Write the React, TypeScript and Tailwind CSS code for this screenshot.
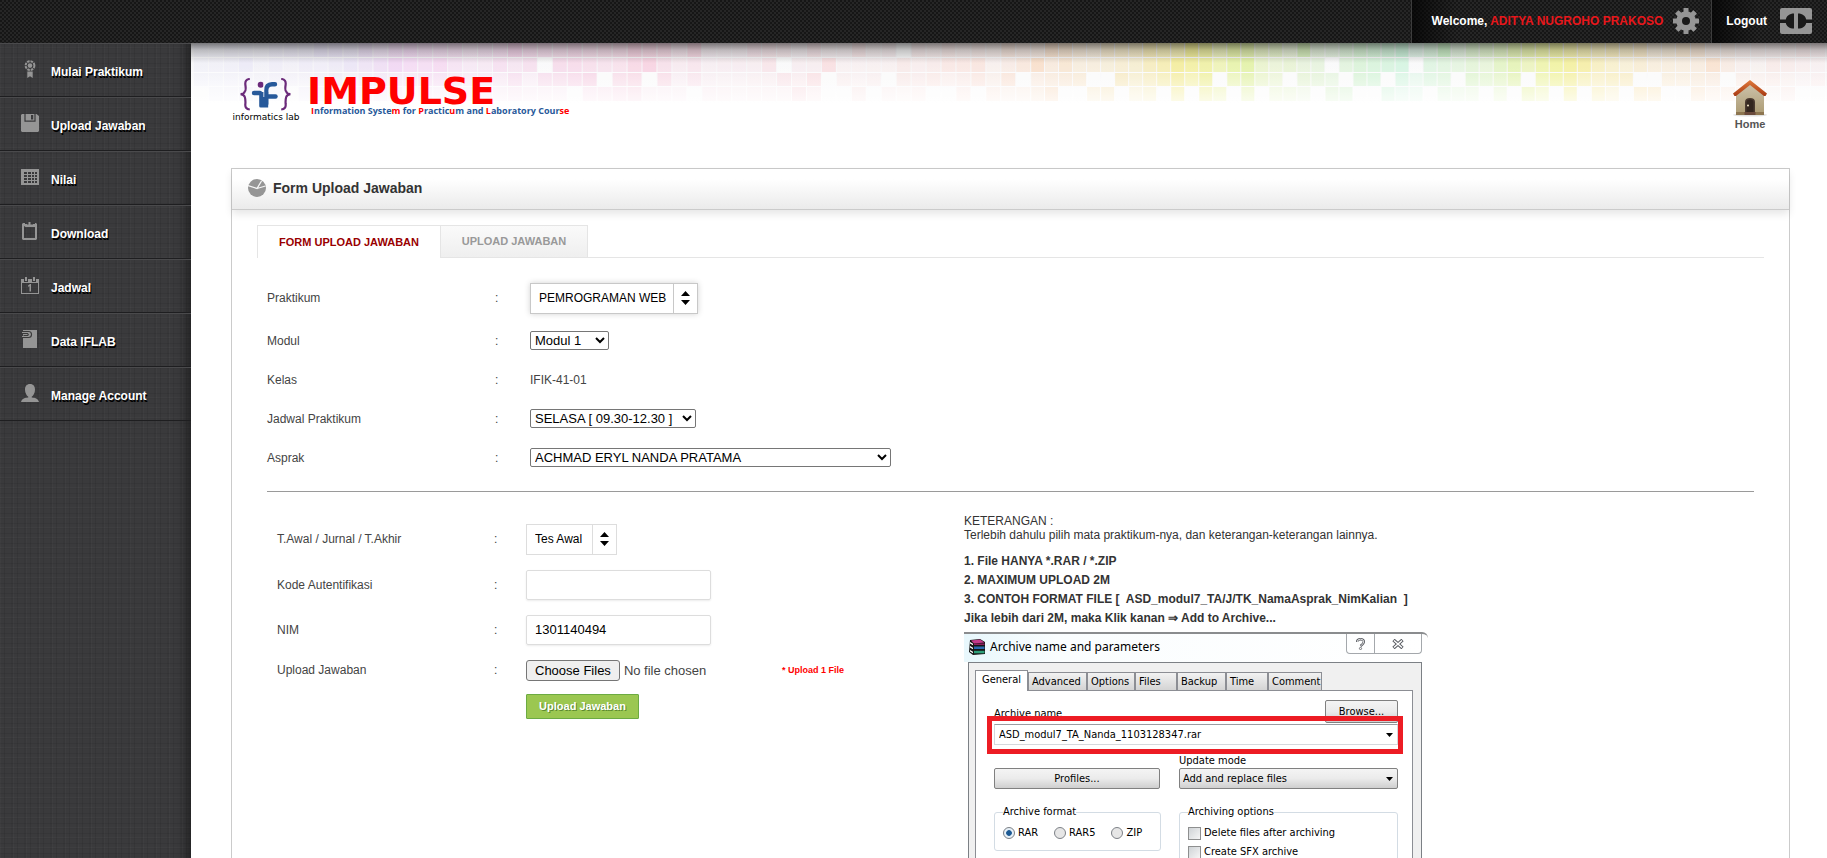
import type { ReactNode } from "react";

/* ---------- Mosaic backdrop ---------- */

// One entry per column, one digit per row: 0 is empty, 9 is the strongest tint.
const mosaicColumns =
  "1210 1211 2211 2513 1111 3321 3110 3312 6222 5331 4511 6532 4743 6932 6730 5652 5751 5432 3221 4222 5521 8352 6511 5051 5651 6660 5573 " +
  "5403 5454 8765 7901 7561 3211 8440 1112 1212 1211 5222 5622 4062 1237 5283 1900 1120 5114 1120 2102 0441 3232 2340 4520 2533 3650 2123 5362 3502 3934 7447 6640 4340 3304 5305 5460 5443 7654 6760 6987 9860 8887 5605 " +
  "8860 8986 5440 5333 3403 9342 3340 3035 5405 7660 7660 7605 8653 3022 5440 9443 3302 5452 5340 6653 8870 8607 8875 8980 7987 6850 5545 6453 5350 6406 3306 4330 6330 6446 3943 3403 2232 2122 2431 3424 5310 3230 2110 2210";

const tintStops: [number, number, number, number][] = [
  [0, 226, 226, 246],
  [150, 222, 210, 242],
  [210, 242, 200, 240],
  [430, 247, 194, 216],
  [560, 248, 214, 222],
  [760, 250, 214, 206],
  [850, 248, 214, 184],
  [940, 244, 224, 150],
  [990, 242, 234, 118],
  [1040, 222, 240, 132],
  [1110, 204, 236, 170],
  [1210, 184, 242, 208],
  [1290, 204, 240, 160],
  [1350, 236, 242, 132],
  [1390, 246, 232, 124],
  [1450, 249, 222, 166],
  [1510, 249, 218, 190],
  [1570, 248, 218, 210],
  [1640, 248, 224, 226],
];

function tintAt(x: number) {
  for (let i = 1; i < tintStops.length; i++) {
    const a = tintStops[i - 1];
    const b = tintStops[i];
    if (x <= b[0]) {
      const t = Math.max(0, (x - a[0]) / (b[0] - a[0]));
      const mix = [1, 2, 3].map((c) => Math.round(a[c] + (b[c] - a[c]) * t));
      return `rgb(${mix.join(",")})`;
    }
  }
  return "rgb(248,224,226)";
}

function columnEdge(k: number) {
  if (k <= 56) return 3 + k * 14.95;
  if (k <= 102) return 840 + (k - 56) * 14.02;
  return 1485 + (k - 102) * 15;
}

const mosaicRows = [0, 15, 30, 44];

function Mosaic() {
  return (
    <svg className="absolute left-0 top-0 h-[60px] w-[1660px]" viewBox="0 0 1660 60" aria-hidden="true">
      <defs>
        <linearGradient id="fade" x1="0" y1="0" x2="0" y2="1">
          <stop offset="0" stopColor="#fff" stopOpacity="0" />
          <stop offset="0.5" stopColor="#fff" stopOpacity="0.15" />
          <stop offset="1" stopColor="#fff" stopOpacity="0.75" />
        </linearGradient>
        <linearGradient id="haze" x1="0" y1="0" x2="0" y2="1">
          <stop offset="0" stopColor="#f0f0f3" />
          <stop offset="1" stopColor="#fff" />
        </linearGradient>
        <linearGradient id="drop" x1="0" y1="0" x2="0" y2="1">
          <stop offset="0" stopColor="#000" stopOpacity="0.5" />
          <stop offset="0.35" stopColor="#000" stopOpacity="0.22" />
          <stop offset="1" stopColor="#000" stopOpacity="0" />
        </linearGradient>
      </defs>
      <rect width="1660" height="60" fill="url(#haze)" />
      {mosaicColumns.split(" ").map((col, k) => {
        const x = columnEdge(k);
        const w = columnEdge(k + 1) - x - 1;
        return col.split("").map((d, r) => (
          <rect
            key={`${k}-${r}`}
            x={x}
            y={mosaicRows[r]}
            width={w}
            height={14}
            fill={d === "0" ? "#fafafa" : tintAt(x)}
            opacity={d === "0" ? 0.8 : 0.16 + Number(d) * 0.066}
          />
        ));
      })}
      {mosaicRows.slice(1).map((y) => (
        <rect key={y} y={y - 1} width="1660" height="1" fill="#fbfbfd" />
      ))}
      <rect width="1660" height="60" fill="url(#fade)" />
      <rect width="1660" height="20" fill="url(#drop)" />
    </svg>
  );
}

/* ---------- Icons ---------- */

const AwardIcon = () => (
  <svg viewBox="0 0 18 18" className="h-[18px] w-[18px]" fill="#959595" aria-hidden="true">
    <circle cx="9" cy="5.6" r="4.4" fill="none" stroke="#959595" strokeWidth="2" strokeDasharray="2.6 .85" />
    <circle cx="9" cy="5.6" r="2.3" />
    <path d="M6.3 11.5h5.4V18L9 16.2 6.3 18z" />
  </svg>
);
const DiskIcon = () => (
  <svg viewBox="0 0 18 18" className="h-[18px] w-[18px]" fill="#959595" aria-hidden="true">
    <path fillRule="evenodd" d="M0 1 1 0h2.400v7.800h11.200V0h.9L18 2v15l-1 1H1l-1-1zM4.600 0h8.800v6.600H4.600zM10 1v4.500h2.200V1z" />
  </svg>
);
const TableIcon = () => (
  <svg viewBox="0 0 18 16" className="h-4 w-[18px]" aria-hidden="true">
    <path
      fill="#959595"
      fillRule="evenodd"
      d="M0 0h18v16H0zM3 3v2h3V3zm4 0v2h3V3zm4 0v2h2V3zm3 0v2h2V3zM3 6v2h3V6zm4 0v2h3V6zm4 0v2h2V6zm3 0v2h2V6zM3 9v2h3V9zm4 0v2h3V9zm4 0v2h2V9zm3 0v2h2V9zM3 12v2h3v-2zm4 0v2h3v-2zm4 0v2h2v-2zm3 0v2h2v-2z"
    />
  </svg>
);
const ClipboardIcon = () => (
  <svg viewBox="0 0 16 18" className="ml-px h-[18px] w-4" fill="#959595" aria-hidden="true">
    <path fillRule="evenodd" d="M1 1h2v1h2v2h6V2h2V1h1l1 1v15l-1 1H1l-1-1V2zm1 3v12h11V5h-1.500H3.500z" />
    <path d="M4 2.500h2.500V0h2v2.500H11V5H4z" />
  </svg>
);
const CalendarIcon = () => (
  <svg viewBox="0 0 18 17" className="h-[17px] w-[18px]" fill="#959595" aria-hidden="true">
    <path fillRule="evenodd" d="M0 2h3v3h4V2h4v3h4V2h3v15H0zm1 4v10h16V6z" />
    <path d="M4 0h2v4H4zM12 0h2v4h-2zM7 8.500 9 7h1v7.500H8.500V9.200L7 9.700z" />
  </svg>
);
const DocClipIcon = () => (
  <svg viewBox="0 0 16 18" className="ml-px h-[18px] w-4" aria-hidden="true">
    <path fill="#959595" d="M1 0h14v18H1z" />
    <path fill="none" stroke="#3a3a3a" strokeWidth="1.200" d="M0 1.500h6.500a3 3 0 0 1 0 6H0M0 3.500h5.500a1.200 1.200 0 0 1 0 2.200H1.500" />
    <path fill="none" stroke="#959595" strokeWidth="1" d="M0 2.500h6a2 2 0 0 1 0 4H0" />
  </svg>
);
const PersonIcon = () => (
  <svg viewBox="0 0 18 18" className="h-[18px] w-[18px]" fill="#959595" aria-hidden="true">
    <path d="M9 0c3.400 0 5 2.400 5 5.600 0 3.300-1.600 6.500-3.500 7.400l.5.600c2.600.400 6 .600 7 4.400H0c1-3.800 4.400-4 7-4.400l.5-.600C5.600 12.100 4 8.900 4 5.600 4 2.400 5.600 0 9 0z" />
  </svg>
);
const PieIcon = () => (
  <svg viewBox="0 0 18 18" className="h-[18px] w-[18px]" aria-hidden="true">
    <circle cx="9" cy="9" r="9" fill="#959595" />
    <path d="M0 6.500 9 9.500 13.500 2M9 9.500 17.500 7" fill="none" stroke="#f6f6f6" strokeWidth="1.300" />
  </svg>
);
const GearIcon = () => (
  <svg viewBox="0 0 26 26" className="h-[26px] w-[26px] shrink-0" fill="#959595" aria-hidden="true">
    {[0, 45, 90, 135].map((a) => (
      <rect key={a} x="10.500" y="0" width="5" height="26" rx=".5" transform={`rotate(${a} 13 13)`} />
    ))}
    <circle cx="13" cy="13" r="9.800" />
    <circle cx="13" cy="13" r="4" fill="#191919" />
  </svg>
);
const ExitIcon = () => (
  <svg viewBox="0 0 32 26" className="h-[26px] w-8 shrink-0" aria-hidden="true">
    <rect width="32" height="26" rx="2" fill="#959595" />
    <path d="M14 5.500v15c-4.500 0-7.500-2-8.200-5.500H0v-3.500h5.800C6.500 8 9.500 5.500 14 5.500zM18 5.500c4.500 0 7.500 2.500 8.200 6H32V15h-5.800c-.7 3.500-3.700 5.500-8.200 5.500z" fill="#191919" />
  </svg>
);
const HouseIcon = () => (
  <svg viewBox="0 0 36 38" className="h-[38px] w-9" aria-hidden="true">
    <defs>
      <linearGradient id="wall" x1="0" y1="0" x2="0" y2="1">
        <stop offset="0" stopColor="#cfc5ae" />
        <stop offset="1" stopColor="#ab9a72" />
      </linearGradient>
      <linearGradient id="roof" x1="0" y1="0" x2="0" y2="1">
        <stop offset="0" stopColor="#e07a3c" />
        <stop offset="1" stopColor="#a83a12" />
      </linearGradient>
    </defs>
    <ellipse cx="18" cy="36" rx="17" ry="1.600" fill="#000" opacity=".12" />
    <path d="M4 14 18 3l14 11v22H4z" fill="url(#wall)" />
    <path d="M4 33h28v3H4z" fill="#8d7650" />
    <path d="M13 35V23q0-4 5-4t5 4v12z" fill="#4a3a30" />
    <path d="M14.500 34V23.500q0-3 3.500-3t3.500 3V34z" fill="#33261f" />
    <circle cx="16" cy="26.500" r="1" fill="#f4e6c8" />
    <path d="M12.500 33h11v3h-11z" fill="#6a4a3c" />
    <path d="M18 1 35 14.500l-1.500 2.500H32L18 6 4 17H2.500L1 14.500z" fill="url(#roof)" />
  </svg>
);

function BraceLogo() {
  return (
    <svg viewBox="0 0 52 33" className="h-[33px] w-[52px]" aria-hidden="true">
      <g fill="none" stroke="#6b2a7a" strokeWidth="2.200">
        <path d="M9.800 1Q4.600 1.200 5.400 7T4.800 13.500Q4 16 .6 16.200 4 16.600 4.800 19T5.400 25.500Q4.600 31 9.800 31.500" />
        <path d="M41.200 1Q46.400 1.200 45.600 7T46.200 13.500Q47 16 50.400 16.200 47 16.600 46.200 19T45.600 25.500Q46.400 31 41.200 31.500" />
      </g>
      <circle cx="20.700" cy="6.700" r="3" fill="#6b2a7a" />
      <path d="M19.200 14h9v15.500h-7.500q-1.500 0-1.500-1.500z" fill="#27599a" />
      <g fill="none" stroke="#27599a" strokeWidth="4.400" strokeLinecap="round" strokeLinejoin="round">
        <path d="M14 15h6" />
        <path d="M26.200 26V12.500Q26.200 6.500 32 6.300h3" />
        <path d="M26 18.500h9.500" />
      </g>
      <path d="M23.800 5v14" stroke="#fff" strokeWidth=".8" />
    </svg>
  );
}

function UpDown() {
  return (
    <svg viewBox="0 0 9 14" className="h-[14px] w-[9px]" aria-hidden="true">
      <path d="M4.500 0 9 5H0zM4.500 14 9 9H0z" />
    </svg>
  );
}

/* ---------- Page pieces ---------- */

const menu: { label: string; icon: ReactNode }[] = [
  { label: "Mulai Praktikum", icon: <AwardIcon /> },
  { label: "Upload Jawaban", icon: <DiskIcon /> },
  { label: "Nilai", icon: <TableIcon /> },
  { label: "Download", icon: <ClipboardIcon /> },
  { label: "Jadwal", icon: <CalendarIcon /> },
  { label: "Data IFLAB", icon: <DocClipIcon /> },
  { label: "Manage Account", icon: <PersonIcon /> },
];

function TopBar() {
  return (
    <header className="relative z-10 flex h-[43px] shrink-0 justify-end bg-[conic-gradient(#262626_25%,#161616_0_50%,#262626_0_75%,#161616_0)] bg-[length:4px_4px] text-xs font-bold text-white">
      <a
        href="#akun"
        className="flex items-center gap-[10px] border-l border-[#3c3c3c] bg-linear-to-r from-black/70 to-transparent to-15% pb-px pl-5 pr-3"
      >
        <span>
          Welcome, <span className="text-[#e8161b]">ADITYA NUGROHO PRAKOSO</span>
        </span>
        <GearIcon />
      </a>
      <a
        href="#logout"
        className="flex items-center gap-[13px] border-l border-[#3c3c3c] bg-linear-to-r from-black/70 to-transparent to-40% pb-px pl-[14px] pr-[15px]"
      >
        Logout
        <ExitIcon />
      </a>
    </header>
  );
}

function Sidebar() {
  return (
    <nav className="w-[191px] shrink-0 bg-[#3a3a3c] bg-[repeating-linear-gradient(90deg,rgba(255,255,255,.02)_0_1px,transparent_1px_4px,rgba(0,0,0,.08)_4px_5px,transparent_5px_11px,rgba(0,0,0,.05)_11px_13px),repeating-linear-gradient(0deg,rgba(255,255,255,.02)_0_1px,transparent_1px_4px,rgba(0,0,0,.07)_4px_5px,transparent_5px_9px,rgba(0,0,0,.04)_9px_10px)] shadow-[inset_-12px_0_12px_-8px_rgba(0,0,0,.45)]">
      <ul>
        {menu.map((m) => (
          <li key={m.label}>
            <a
              href="#menu"
              className="flex h-[54px] items-center border-b border-t border-b-[#1e1e20] border-t-[#4a4a4c] pl-[21px] text-xs font-bold text-white [text-shadow:1px_2px_0_#000]"
            >
              <span className="mb-[2px] flex w-[30px]">{m.icon}</span>
              <span className="pt-1">{m.label}</span>
            </a>
          </li>
        ))}
      </ul>
    </nav>
  );
}

function Brand() {
  return (
    <div className="flex items-start">
      <div className="flex w-[70px] flex-col items-center pt-[3px]">
        <BraceLogo />
        <span className="whitespace-nowrap pt-px font-['DejaVu_Sans'] text-[9px] leading-[10px] text-black">informatics lab</span>
      </div>
      <div className="pl-[6px] font-bold">
        <div className="font-['DejaVu_Sans'] text-[38px] leading-[33px] text-[#ff0000]">IMPULSE</div>
        <div className="pl-1 font-['Open_Sans'] text-[9px] leading-[6px] text-[#27599a]">
          <span className="text-[#f00]">I</span>nformation Syste<span className="text-[#f00]">m</span> for{" "}
          <span className="text-[#f00]">P</span>ractic<span className="text-[#f00]">u</span>m and{" "}
          <span className="text-[#f00]">L</span>aboratory Cour<span className="text-[#f00]">se</span>
        </div>
      </div>
    </div>
  );
}

function SpinSelect({ id, value, className }: { id: string; value: string; className: string }) {
  return (
    <span className={"relative flex h-[31px] border bg-white " + className}>
      <select id={id} className="w-full appearance-none pl-2 text-xs text-black outline-none">
        <option>{value}</option>
      </select>
      <span className="pointer-events-none absolute inset-y-0 right-0 flex w-6 items-center justify-center border-l border-inherit bg-white">
        <UpDown />
      </span>
    </span>
  );
}

function PlainSelect({ id, value, className }: { id: string; value: string; className: string }) {
  return (
    <select id={id} className={"h-[19px] rounded-[2px] border border-[#767676] bg-white text-[13px] text-black " + className}>
      <option>{value}</option>
    </select>
  );
}

function Row({ label, htmlFor, tall, children }: { label: string; htmlFor?: string; tall?: boolean; children: ReactNode }) {
  return (
    <div className={"grid grid-cols-[228px_35px_1fr] items-center " + (tall ? "h-[46px]" : "h-[39px]")}>
      <label htmlFor={htmlFor}>{label}</label>
      <span>:</span>
      <div className="flex">{children}</div>
    </div>
  );
}

function UploadRow({ label, htmlFor, height, children }: { label: string; htmlFor: string; height: string; children: ReactNode }) {
  return (
    <div className={"grid grid-cols-[217px_32px_1fr] items-center " + height}>
      <label htmlFor={htmlFor}>{label}</label>
      <span>:</span>
      <div className="flex items-center">{children}</div>
    </div>
  );
}

/* ---------- Archive dialog illustration ---------- */

const dialogTabs: [string, string][] = [
  ["Advanced", "w-[59px]"],
  ["Options", "w-12"],
  ["Files", "w-[42px]"],
  ["Backup", "w-[49px]"],
  ["Time", "w-[42px]"],
  ["Comment", "w-[54px]"],
];

const grayButton =
  "border border-[#808080] rounded-[2px] bg-linear-to-b from-[#f4f4f4] via-[#ebebeb] via-50% to-[#cfcfcf]";

function Caret() {
  return (
    <svg viewBox="0 0 7 4" className="h-1 w-[7px]" aria-hidden="true">
      <path d="M0 0h7L3.500 4z" />
    </svg>
  );
}

function BooksIcon() {
  return (
    <svg viewBox="0 0 16 16" className="h-4 w-4" aria-hidden="true">
      <path d="M1 1 11 0l5 3v12l-12 1-4-3z" fill="#151515" />
      <path d="M2 1.500 11 .5 15.500 3.500 5 4.500z" fill="#c33a8c" />
      <path d="M5 4.500h10.500V6H5z" fill="#8c1c5c" />
      <path d="M5 7.500h10.500v2.500H5z" fill="#2a6ab0" />
      <path d="M5 11.800h10.500v2.500H5z" fill="#2ea07a" />
      <path d="M1 3l3 1.800v1.400L1 4.500zM1 7l3 1.800v1.400L1 8.500zM1 11l3 1.800v1.400L1 12.500z" fill="#fff" />
    </svg>
  );
}

function ArchiveDialog() {
  return (
    <figure className="relative w-[464px] font-['DejaVu_Sans_Condensed','DejaVu_Sans'] text-[11px] leading-[14px] text-black">
      <div className="flex h-[30px] items-start rounded-tr-md border-t-2 border-[#8a8c8e] bg-linear-to-r from-[#e8f7fc] via-[#fafdfe] via-20% to-white pl-[5px]">
        <span className="flex items-center gap-[5px] pt-[5px]">
          <BooksIcon />
          <span className="whitespace-nowrap font-['Noto_Sans'] text-xs leading-4">Archive name and parameters</span>
        </span>
        <span className="ml-auto mr-[6px] flex h-5 rounded-b-[4px] border border-t-0 border-[#a4a8ac]">
          <button type="button" aria-label="Bantuan" className="flex w-7 items-center justify-center border-r border-[#a4a8ac]">
            <svg viewBox="0 0 9 12" className="h-3 w-[9px]" aria-hidden="true">
              <path d="M1.200 4Q1 1.200 4.500 1.200T7.800 4Q7.800 5.500 4.500 8" fill="none" stroke="#55585e" strokeWidth="2.400" />
              <path d="M1.200 4Q1 1.200 4.500 1.200T7.800 4Q7.800 5.500 4.500 8" fill="none" stroke="#fff" strokeWidth=".8" />
              <circle cx="4.500" cy="10.500" r="1.100" fill="#fff" stroke="#55585e" strokeWidth=".8" />
            </svg>
          </button>
          <button type="button" aria-label="Tutup" className="flex w-[46px] items-center justify-center">
            <svg viewBox="0 0 12 10" className="h-[10px] w-3" aria-hidden="true">
              <path d="M1.500 1 10.500 9M10.500 1 1.500 9" stroke="#55585e" strokeWidth="3.400" />
              <path d="M2 1.500 10 8.500M10 1.500 2 8.500" stroke="#fff" strokeWidth="1.600" />
            </svg>
          </button>
        </span>
      </div>
      <div className="ml-1 mr-[6px] border border-b-0 border-[#7c8085] bg-[#f0f0f0] pl-[6px] pr-2 pt-[7px]">
        <div className="flex items-end">
          <button type="button" className="z-[1] -mb-px h-[21px] w-[53px] border border-b-0 border-[#8c8e94] bg-white pb-[2px]">
            General
          </button>
          {dialogTabs.map(([t, w]) => (
            <button
              key={t}
              type="button"
              className={"h-[18px] border border-b-0 border-[#8c8e94] bg-linear-to-b from-[#f2f2f2] to-[#d4d4d4] px-[3px] text-left " + w}
            >
              {t}
            </button>
          ))}
        </div>
        <div className="border border-b-0 border-[#8c8e94] bg-white pb-5 pl-[18px] pr-[14px] pt-[9px]">
          <div className="flex h-6 items-start justify-between">
            <label htmlFor="archive-name" className="pt-[7px]">
              Archive name
            </label>
            <button type="button" className={"h-[23px] w-[73px] " + grayButton}>
              Browse...
            </button>
          </div>
          <div className="relative">
            <input
              id="archive-name"
              readOnly
              value="ASD_modul7_TA_Nanda_1103128347.rar"
              className="h-[21px] w-full border border-[#d5d8dc] border-t-[#9a9da2] bg-white px-1 outline-none"
            />
            <span className="absolute right-[5px] top-[9px]">
              <Caret />
            </span>
            <span className="pointer-events-none absolute -bottom-[9px] -left-[7px] -right-[5px] -top-2 border-5 border-[#ed1c24]" />
          </div>
          <div className="mt-[9px] grid grid-cols-[166px_219px] justify-between">
            <button type="button" className={"mt-[14px] h-[21px] " + grayButton}>
              Profiles...
            </button>
            <div className="relative">
              <label htmlFor="update-mode" className="block">
                Update mode
              </label>
              <select id="update-mode" className={"block h-[21px] w-full appearance-none pl-[3px] " + grayButton}>
                <option>Add and replace files</option>
              </select>
              <span className="pointer-events-none absolute bottom-[8px] right-[5px]">
                <Caret />
              </span>
            </div>
          </div>
          <div className="mt-4 grid grid-cols-[167px_219px] items-start justify-between">
            <fieldset className="h-[46px] rounded-[3px] border border-[#d3dce4] px-2">
              <legend>Archive format</legend>
              <div className="flex gap-4 pt-[7px]">
                {["RAR", "RAR5", "ZIP"].map((f) => (
                  <label key={f} className="flex items-center gap-[3px]">
                    <input
                      type="radio"
                      name="format"
                      defaultChecked={f === "RAR"}
                      className="h-3 w-3 appearance-none rounded-full border border-[#7d8187] bg-[#e6e6e6] checked:bg-[radial-gradient(#1c5a94_0_35%,#e6f0f8_45%)]"
                    />
                    {f}
                  </label>
                ))}
              </div>
            </fieldset>
            <fieldset className="rounded-[3px] border border-[#d3dce4] px-2 pb-4">
              <legend>Archiving options</legend>
              <div className="flex flex-col gap-[5px] pt-[7px]">
                {["Delete files after archiving", "Create SFX archive"].map((o) => (
                  <label key={o} className="flex items-center gap-[3px]">
                    <input
                      type="checkbox"
                      className="h-[13px] w-[13px] appearance-none border border-[#8e8f8f] bg-linear-to-br from-[#cfd3d6] to-[#f6f6f6]"
                    />
                    {o}
                  </label>
                ))}
              </div>
            </fieldset>
          </div>
        </div>
      </div>
    </figure>
  );
}

/* ---------- Page ---------- */

export default function App() {
  return (
    <div className="flex h-screen flex-col overflow-hidden bg-white font-['Liberation_Sans',Arial,sans-serif] text-xs text-[#444]">
      <TopBar />
      <div className="flex min-h-0 flex-1">
        <Sidebar />
        <main className="relative min-w-0 flex-1 overflow-hidden pl-10 pr-[37px]">
          <Mosaic />
          <div className="relative flex h-[125px] items-start justify-between pr-[22px] pt-8">
            <Brand />
            <a href="#home" className="flex flex-col items-center pt-1 text-[11px] font-bold leading-[14px] text-[#555]">
              <HouseIcon />
              Home
            </a>
          </div>

          <section className="border border-[#cbcbcb] bg-white">
            <h1 className="flex h-[41px] items-center gap-[7px] border-b border-[#cbcbcb] bg-linear-to-b from-white from-25% to-[#ebebeb] pb-[2px] pl-4 text-sm font-bold text-[#333] shadow-[0_4px_8px_rgba(0,0,0,.1)]">
              <PieIcon />
              Form Upload Jawaban
            </h1>

            <div className="px-[25px] pt-[15px]">
              <div className="flex border-b border-[#e5e5e5] text-[11px] font-bold" role="tablist">
                <button
                  type="button"
                  role="tab"
                  aria-selected="true"
                  className="-mb-px h-[33px] w-[184px] border border-b-0 border-[#e5e5e5] bg-white text-[#990000]"
                >
                  FORM UPLOAD JAWABAN
                </button>
                <button
                  type="button"
                  role="tab"
                  aria-selected="false"
                  className="h-8 w-[147px] border border-b-0 border-l-0 border-[#e5e5e5] bg-linear-to-b from-[#fafafa] to-[#efefef] text-[#999]"
                >
                  UPLOAD JAWABAN
                </button>
              </div>

              <form className="px-[10px] pt-[17px]" onSubmit={(e) => e.preventDefault()}>
                <Row label="Praktikum" htmlFor="praktikum" tall>
                  <SpinSelect
                    id="praktikum"
                    value="PEMROGRAMAN WEB"
                    className="w-[168px] border-[#c8c8c8] shadow-[0_0_6px_rgba(0,0,0,.18)]"
                  />
                </Row>
                <Row label="Modul" htmlFor="modul">
                  <PlainSelect id="modul" value="Modul 1" className="w-[79px]" />
                </Row>
                <Row label="Kelas">IFIK-41-01</Row>
                <Row label="Jadwal Praktikum" htmlFor="jadwal">
                  <PlainSelect id="jadwal" value="SELASA [ 09.30-12.30 ]" className="w-[166px]" />
                </Row>
                <Row label="Asprak" htmlFor="asprak">
                  <PlainSelect id="asprak" value="ACHMAD ERYL NANDA PRATAMA" className="w-[361px]" />
                </Row>

                <hr className="mt-[14px] border-t border-[#9a9a9a]" />

                <div className="flex items-start">
                  <div className="w-[697px] shrink-0 pl-[10px] pt-6">
                    <UploadRow label="T.Awal / Jurnal / T.Akhir" htmlFor="jenis" height="h-[46px]">
                      <SpinSelect id="jenis" value="Tes Awal" className="w-[91px] border-[#ddd]" />
                    </UploadRow>
                    <UploadRow label="Kode Autentifikasi" htmlFor="kode" height="h-[45px]">
                      <input
                        id="kode"
                        className="h-[30px] w-[185px] rounded-[2px] border border-[#ddd] px-2 text-[13px] text-black shadow-[0_1px_2px_rgba(0,0,0,.08)]"
                      />
                    </UploadRow>
                    <UploadRow label="NIM" htmlFor="nim" height="h-[45px]">
                      <input
                        id="nim"
                        defaultValue="1301140494"
                        className="h-[30px] w-[185px] rounded-[2px] border border-[#ddd] px-2 text-[13px] text-black shadow-[0_1px_2px_rgba(0,0,0,.08)]"
                      />
                    </UploadRow>
                    <UploadRow label="Upload Jawaban" htmlFor="berkas" height="h-9">
                      <input
                        id="berkas"
                        type="file"
                        multiple
                        className="w-64 text-[13px] leading-[19px] file:mr-1 file:h-[21px] file:rounded-[3px] file:border file:border-solid file:border-[#767676] file:bg-[#efefef] file:px-2 file:text-black"
                      />
                      <span className="text-[9px] font-bold text-[#f00]">* Upload 1 File</span>
                    </UploadRow>
                    <div className="pl-[249px] pt-[6px]">
                      <button
                        type="submit"
                        className="h-[25px] w-[113px] rounded-[1px] border border-[#6cab42] bg-[#9bc751] text-[11px] font-bold text-white [text-shadow:1px_1px_0_#5d8a2e]"
                      >
                        Upload Jawaban
                      </button>
                    </div>
                  </div>

                  <div className="pt-[22px]">
                    <p className="leading-[14px] text-[#333]">
                      KETERANGAN :
                      <br />
                      Terlebih dahulu pilih mata praktikum-nya, dan keterangan-keterangan lainnya.
                    </p>
                    <p className="whitespace-pre pb-1 pt-[10px] font-bold leading-[19px] text-[#333]">
                      {"1. File HANYA *.RAR / *.ZIP\n2. MAXIMUM UPLOAD 2M\n3. CONTOH FORMAT FILE [  ASD_modul7_TA/J/TK_NamaAsprak_NimKalian  ]\nJika lebih dari 2M, maka Klik kanan ⇒ Add to Archive..."}
                    </p>
                    <ArchiveDialog />
                  </div>
                </div>
              </form>
            </div>
          </section>
        </main>
      </div>
    </div>
  );
}
